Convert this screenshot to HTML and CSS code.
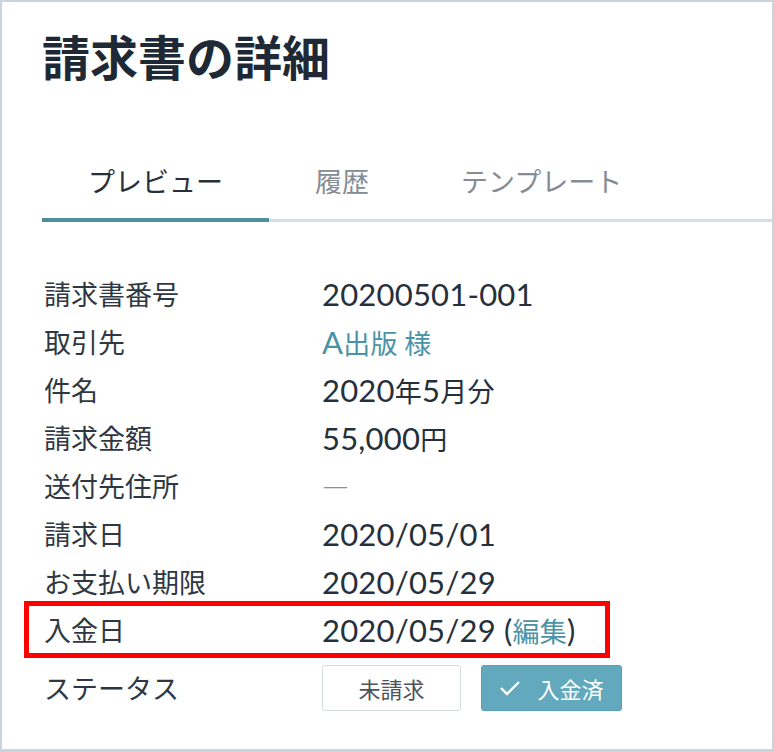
FILE: index.html
```html
<!DOCTYPE html>
<html lang="ja">
<head>
<meta charset="utf-8">
<link rel="stylesheet" href="styles.css">
</head>
<body>
<div class="frame">
  <h1 class="title">請求書の詳細</h1>
  <div class="tabs">
    <div class="tab active">プレビュー</div>
    <div class="tab">履歴</div>
    <div class="tab">テンプレート</div>
  </div>
  <div class="details">
    <div class="row"><div class="label">請求書番号</div><div class="value">20200501-001</div></div>
    <div class="row"><div class="label">取引先</div><div class="value link">A<span class="ja">出版 様</span></div></div>
    <div class="row"><div class="label">件名</div><div class="value">2020<span class="ja">年</span>5<span class="ja">月分</span></div></div>
    <div class="row"><div class="label">請求金額</div><div class="value">55,000<span class="ja">円</span></div></div>
    <div class="row"><div class="label">送付先住所</div><div class="value dash"><span class="ja">―</span></div></div>
    <div class="row"><div class="label">請求日</div><div class="value">2020/05/01</div></div>
    <div class="row"><div class="label">お支払い期限</div><div class="value">2020/05/29</div></div>
    <div class="row highlight"><div class="label">入金日</div><div class="value">2020/05/29 (<span class="ja link">編集</span>)</div><div class="redbox"></div></div>
    <div class="row status"><div class="label">ステータス</div>
      <div class="buttons">
        <div class="btn">未請求</div>
        <div class="btn on"><svg class="check" width="22" height="16" viewBox="0 0 22 16"><polyline points="2,8 8,14 20,2" fill="none" stroke="#fff" stroke-width="2.4"/></svg>入金済</div>
      </div>
    </div>
  </div>
</div>
</body>
</html>
```
FILE: styles.css
```css
html, body { margin: 0; padding: 0; background: #fff; }
.frame {
  width: 774px; height: 752px; box-sizing: border-box;
  border: 2px solid #cdd3dc; border-bottom-width: 3px;
  background: #fff;
  font-family: "Lato", "Noto Sans CJK JP", sans-serif;
  color: #2b333d;
}
.title {
  margin: 25px 0 0 40px;
  font-size: 48px; line-height: 56px; font-weight: 700;
  color: #1e2935;
  font-family: "Noto Sans CJK JP", sans-serif;
}
.tabs {
  margin: 60px 0 0 40px;
  display: flex;
  box-shadow: inset 0 -3px 0 #d8dde5;
}
.tab {
  padding: 20px 46px 19px;
  font-size: 27px; line-height: 36px;
  color: #858c94;
  border-bottom: 4px solid transparent;
  font-family: "Noto Sans CJK JP", sans-serif;
}
.tab.active { color: #26303b; border-bottom-color: #4e8f9c; }
.details { padding: 48px 0 0 42px; }
.row {
  display: grid; grid-template-columns: 278px auto;
  font-size: 27px; line-height: 48px; height: 48px;
  position: relative;
}
.label { color: #2f3842; font-family: "Noto Sans CJK JP", sans-serif; }
.value { color: #26303b; font-size: 31px; letter-spacing: 0.2px; }
.ja { font-size: 27px; letter-spacing: 0.3px; font-family: "Noto Sans CJK JP", sans-serif; }
.link { color: #4a93a6; }
.dash { color: #8a9098; }
.redbox {
  position: absolute; left: -20px; top: -5px;
  width: 586px; height: 57px; box-sizing: border-box;
  border: 5px solid #ff0000;
}
.row.status { margin-top: 11px; height: 46px; line-height: 46px; }
.buttons { display: flex; gap: 20px; }
.btn {
  width: 139px; height: 46px; box-sizing: border-box;
  border: 1px solid #d3d9e0; border-radius: 3px;
  display: flex; align-items: center; justify-content: center;
  font-size: 22px; color: #4a525c;
  font-family: "Noto Sans CJK JP", sans-serif;
}
.btn.on {
  width: 141px; background: #62a9bd; border-color: #5a9fb3; color: #fff; gap: 16px;
}
.check { display: block; }
```
